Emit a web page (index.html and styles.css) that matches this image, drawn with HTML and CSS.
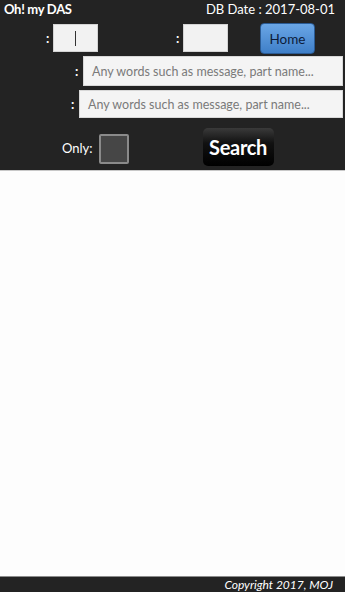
FILE: index.html
```html
<!DOCTYPE html>
<html>
<head>
<meta charset="utf-8">
<link rel="stylesheet" href="styles.css">
</head>
<body>
<div class="page">
  <header class="top">
    <div class="titlebar">
      <span class="title">Oh! my DAS</span>
      <span class="date">DB Date : 2017-08-01</span>
    </div>
    <div class="row row-ids">
      <span class="colon c1">:</span>
      <div class="box box1"><span class="cursor"></span></div>
      <span class="colon c2">:</span>
      <div class="box box2"></div>
      <button class="home">Home</button>
    </div>
    <div class="row row-q1">
      <span class="colon">:</span>
      <div class="field">Any words such as message, part name...</div>
    </div>
    <div class="row row-q2">
      <span class="colon">:</span>
      <div class="field">Any words such as message, part name...</div>
    </div>
    <div class="row row-bottom">
      <span class="only">Only:</span>
      <span class="check"></span>
      <button class="search">Search</button>
    </div>
  </header>
  <main class="content"></main>
  <footer class="foot">Copyright 2017, MOJ</footer>
</div>
</body>
</html>
```
FILE: styles.css
```css
html, body {
  margin: 0;
  padding: 0;
  background: #fdfdfd;
}
.page {
  width: 345px;
  height: 592px;
  display: flex;
  flex-direction: column;
  font-family: "Lato", "Noto Sans", sans-serif;
  color: #fff;
}
.top {
  background: #232323;
  height: 170px;
  border-bottom: 1px solid #c8c8c8;
  box-sizing: content-box;
}
.titlebar {
  display: flex;
  justify-content: space-between;
  align-items: center;
  height: 18px;
  padding: 0 10px 0 4px;
  font-size: 13px;
}
.title {
  font-weight: bold;
  letter-spacing: -0.3px;
}
.date {
  font-size: 13px;
}
.row {
  display: flex;
  align-items: center;
}
.colon {
  font-weight: bold;
  font-size: 13px;
  width: 7px;
}
.row-ids {
  margin-top: 4px;
  height: 32px;
  padding-left: 46px;
}
.box {
  width: 45px;
  height: 28px;
  background: #f2f2f2;
  border: 1px solid #d4d4d4;
  box-sizing: border-box;
  display: flex;
  align-items: center;
}
.cursor {
  display: block;
  width: 1px;
  height: 15px;
  background: #333;
  margin-left: 21px;
}
.c2 {
  margin-left: 78px;
}
.home {
  margin-left: 32px;
  width: 55px;
  height: 31px;
  border: 1px solid #2a5b95;
  border-radius: 4px;
  background: linear-gradient(#6aa6e6, #3f7fc8);
  color: #0c1b3a;
  font-family: "Lato", "Noto Sans", sans-serif;
  font-size: 13.5px;
  padding: 0;
  align-self: flex-start;
  margin-top: 1px;
}
.row-q1 {
  margin-top: 2px;
  padding-left: 75px;
  height: 30px;
}
.row-q1 .colon {
  width: 8px;
}
.field {
  flex: 1;
  height: 30px;
  margin-right: 2px;
  background: #f4f4f4;
  border: 1px solid #d8d8d8;
  box-sizing: border-box;
  color: #7a7a7a;
  font-size: 12.5px;
  display: flex;
  align-items: center;
  padding-left: 8px;
}
.row-q2 {
  margin-top: 4px;
  padding-left: 71px;
  height: 28px;
}
.row-q2 .colon {
  width: 8px;
}
.row-q2 .field {
  height: 28px;
}
.row-bottom {
  margin-top: 9px;
  height: 39px;
  padding-left: 62px;
}
.only {
  font-size: 13px;
  margin-top: 2px;
}
.check {
  display: block;
  width: 30px;
  height: 30px;
  margin-left: 6px;
  margin-top: 4px;
  background: #464646;
  border: 2px solid #8a8a8a;
  border-radius: 2px;
  box-sizing: border-box;
}
.search {
  margin-left: 74px;
  width: 71px;
  height: 38px;
  border: none;
  border-radius: 5px;
  background: linear-gradient(#3a3a3a 0%, #111 40%, #000 100%);
  color: #fff;
  font-family: "Lato", "Noto Sans", sans-serif;
  font-weight: bold;
  font-size: 20px;
  padding: 0;
  letter-spacing: -0.3px;
}
.content {
  flex: 1;
  background: #fdfdfd;
}
.foot {
  height: 15px;
  background: #232323;
  border-top: 1px solid #8c8c8c;
  font-size: 12px;
  font-style: italic;
  text-align: right;
  padding-right: 12px;
  line-height: 15px;
}
```
